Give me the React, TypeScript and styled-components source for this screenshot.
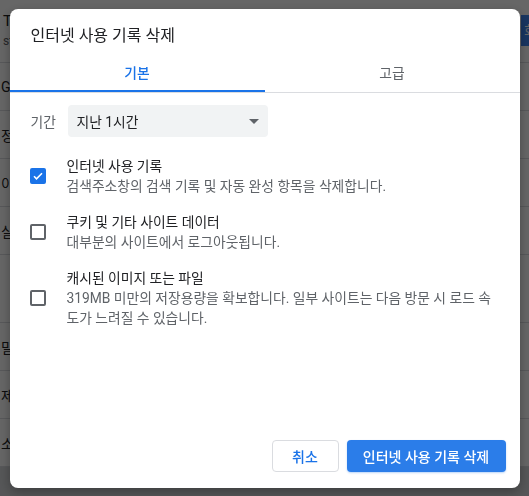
import styled, { createGlobalStyle } from "styled-components";

const GlobalStyle = createGlobalStyle`
  html, body {
    margin: 0;
    padding: 0;
  }
  body {
    font-family: Roboto, "Noto Sans CJK KR", "Noto Sans", sans-serif;
    background: #fff;
    overflow: hidden;
  }
`;

// 배경 설정 페이지 (다이얼로그 뒤) - 가장자리만 보임
const behindRows = [
  { text: "G", tall: false },
  { text: "정", tall: false },
  { text: "이", tall: false },
  { text: "실", tall: false },
  { text: "", tall: true },
  { text: "밀", tall: false },
  { text: "제", tall: false },
  { text: "소", tall: false },
];

const items = [
  { title: "인터넷 사용 기록", desc: "검색주소창의 검색 기록 및 자동 완성 항목을 삭제합니다.", checked: true },
  { title: "쿠키 및 기타 사이트 데이터", desc: "대부분의 사이트에서 로그아웃됩니다.", checked: false },
  {
    title: "캐시된 이미지 또는 파일",
    desc: "319MB 미만의 저장용량을 확보합니다. 일부 사이트는 다음 방문 시 로드 속도가 느려질 수 있습니다.",
    checked: false,
  },
];

const App = () => {
  return (
    <>
      <GlobalStyle />
      <Page>
        <PageHeader>
          <HeaderText>
            <HeaderTitle>T</HeaderTitle>
            <HeaderSub>st</HeaderSub>
          </HeaderText>
          <HeaderButton>회원</HeaderButton>
        </PageHeader>
        {behindRows.map((row, i) => (
          <PageRow key={i} tall={row.tall}>
            {row.text}
          </PageRow>
        ))}
        <PageFooter />
      </Page>
      <Overlay>
        <Dialog>
          <Title>인터넷 사용 기록 삭제</Title>
          <Tabs>
            <Tab active>기본</Tab>
            <Tab>고급</Tab>
          </Tabs>
          <Body>
            <PeriodRow>
              <PeriodLabel>기간</PeriodLabel>
              <Select>
                <span>지난 1시간</span>
                <Arrow />
              </Select>
            </PeriodRow>
            {items.map((item) => (
              <CheckRow key={item.title}>
                <Checkbox checked={item.checked}>
                  {item.checked && (
                    <svg width="12" height="12" viewBox="0 0 24 24">
                      <path d="M4 12.5l5 5L20 6.5" fill="none" stroke="#fff" strokeWidth="3.2" />
                    </svg>
                  )}
                </Checkbox>
                <CheckText>
                  <CheckTitle>{item.title}</CheckTitle>
                  <CheckDesc>{item.desc}</CheckDesc>
                </CheckText>
              </CheckRow>
            ))}
          </Body>
          <Footer>
            <CancelButton>취소</CancelButton>
            <ConfirmButton>인터넷 사용 기록 삭제</ConfirmButton>
          </Footer>
        </Dialog>
      </Overlay>
    </>
  );
};

export default App;

const Page = styled.div`
  width: 529px;
  height: 496px;
  overflow: hidden;
  background: #fff;
  color: #202124;
`;
const PageHeader = styled.div`
  display: flex;
  justify-content: space-between;
  align-items: flex-start;
  height: 63px;
  box-sizing: border-box;
  border-bottom: 1px solid #dadce0;
`;
const HeaderText = styled.div`
  padding: 12px 0 0 3px;
`;
const HeaderTitle = styled.div`
  font-size: 15px;
  line-height: 18px;
`;
const HeaderSub = styled.div`
  font-size: 12px;
  line-height: 16px;
  color: #5f6368;
  margin-top: 3px;
`;
const HeaderButton = styled.div`
  margin-top: 15px;
  margin-right: -40px;
  width: 48px;
  height: 31px;
  background: #3f86f2;
  color: #fff;
  font-size: 13px;
  line-height: 31px;
  padding-left: 3px;
  box-sizing: border-box;
`;
const PageRow = styled.div<{ tall?: boolean }>`
  height: ${({ tall }) => (tall ? "68px" : "48px")};
  box-sizing: border-box;
  border-bottom: 1px solid #dadce0;
  display: flex;
  align-items: center;
  padding-left: 1px;
  font-size: 14px;
`;
const PageFooter = styled.div`
  height: 60px;
  background: #d6d8db;
`;

const Overlay = styled.div`
  position: fixed;
  inset: 0;
  background: rgba(0, 0, 0, 0.6);
  display: flex;
  align-items: center;
  justify-content: center;
`;
const Dialog = styled.div`
  width: 510px;
  height: 479px;
  background: #fff;
  border-radius: 8px;
  box-shadow: 0 4px 12px rgba(0, 0, 0, 0.3);
  display: flex;
  flex-direction: column;
  box-sizing: border-box;
  color: #202124;
`;
const Title = styled.div`
  padding: 17px 20px 0 21px;
  font-size: 16px;
  line-height: 20px;
`;
const Tabs = styled.div`
  display: flex;
  margin-top: 6px;
  border-bottom: 1px solid #dadce0;
`;
const Tab = styled.div<{ active?: boolean }>`
  flex: 1;
  height: 40px;
  display: flex;
  align-items: center;
  justify-content: center;
  font-size: 13.8px;
  font-weight: ${({ active }) => (active ? 500 : 400)};
  color: ${({ active }) => (active ? "#1a73e8" : "#5f6368")};
  box-shadow: ${({ active }) => (active ? "inset 0 -2px 0 #1a73e8" : "none")};
`;
const Body = styled.div`
  padding: 12px 20px 0 20px;
`;
const PeriodRow = styled.div`
  display: flex;
  align-items: center;
  padding-left: 1px;
  margin-bottom: 11px;
`;
const PeriodLabel = styled.div`
  width: 37px;
  font-size: 13.8px;
  color: #5f6368;
`;
const Select = styled.div`
  width: 200px;
  height: 32px;
  box-sizing: border-box;
  background: #f1f3f4;
  border-radius: 4px;
  display: flex;
  align-items: center;
  justify-content: space-between;
  padding: 0 9px 0 9px;
  font-size: 13.8px;
  color: #202124;
`;
const Arrow = styled.div`
  width: 0;
  height: 0;
  border-left: 5px solid transparent;
  border-right: 5px solid transparent;
  border-top: 5px solid #5f6368;
  margin-top: 1px;
`;
const CheckRow = styled.div`
  display: flex;
  align-items: center;
  padding: 8px 0;
`;
const Checkbox = styled.div<{ checked?: boolean }>`
  width: 16px;
  height: 16px;
  box-sizing: border-box;
  flex-shrink: 0;
  border-radius: 2px;
  border: 2px solid ${({ checked }) => (checked ? "#1a73e8" : "#5f6368")};
  background: ${({ checked }) => (checked ? "#1a73e8" : "transparent")};
  display: flex;
  align-items: center;
  justify-content: center;
  margin-right: 21px;
`;
const CheckText = styled.div`
  padding-right: 6px;
  font-size: 13.8px;
  line-height: 20px;
`;
const CheckTitle = styled.div`
  color: #202124;
`;
const CheckDesc = styled.div`
  color: #5f6368;
  word-break: break-all;
`;
const Footer = styled.div`
  margin-top: auto;
  display: flex;
  justify-content: flex-end;
  gap: 8px;
  padding: 0 14px 16px 0;
`;
const CancelButton = styled.button`
  width: 67px;
  height: 32px;
  border: 1px solid #dadce0;
  border-radius: 4px;
  background: #fff;
  color: #1a73e8;
  font-family: inherit;
  font-size: 14px;
  font-weight: 500;
`;
const ConfirmButton = styled.button`
  width: 159px;
  height: 32px;
  border: none;
  border-radius: 4px;
  background: #2b7de9;
  color: #fff;
  font-family: inherit;
  font-size: 14px;
  font-weight: 500;
  box-shadow: 0 1px 2px rgba(26, 115, 232, 0.3);
`;
